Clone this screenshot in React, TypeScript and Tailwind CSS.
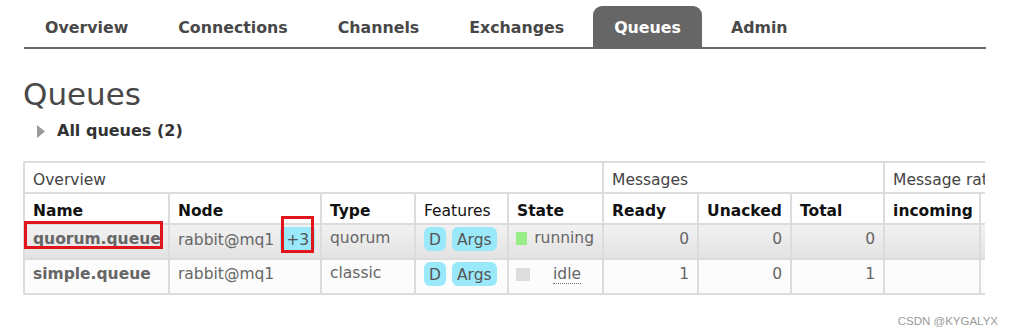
import React from "react";

const tabs = ["Overview", "Connections", "Channels", "Exchanges", "Queues", "Admin"];

const bd = "border-2 border-[#dcdcdc]";

function Badge({ children, cls = "" }: { children: React.ReactNode; cls?: string }) {
  return (
    <span className={`inline-block rounded-[6px] bg-[#9ae9fb] px-[5px] pt-[3px] pb-[1px] leading-[20px] text-[#555] ${cls}`}>
      {children}
    </span>
  );
}

export default function App() {
  const th = `${bd} h-[31px] px-[8px] pt-[4px] text-left align-middle`;
  const td = `${bd} h-[35px] px-[8px] pb-[5px] align-middle text-[#666]`;
  const num = `${bd} h-[35px] pr-[8px] pb-[6px] text-right align-middle text-[#666]`;
  return (
    <div
      className="relative h-[335px] w-[1015px] overflow-hidden bg-white text-[#484848]"
      style={{ fontFamily: '"DejaVu Sans", Verdana, sans-serif' }}
    >
      {/* nav */}
      <div className="ml-[24px] w-[962px] pt-[6px]">
        <div className="flex gap-[8px] border-b-2 border-[#666]">
          {tabs.map((t) =>
            t === "Queues" ? (
              <div
                key={t}
                className="flex h-[41px] items-center rounded-t-[9px] bg-[#666] px-[21px] pt-[2px] text-[15.8px] font-bold text-white"
              >
                {t}
              </div>
            ) : (
              <div key={t} className="flex h-[41px] items-center px-[21px] pt-[2px] text-[15.8px] font-bold text-[#484848]">
                {t}
              </div>
            )
          )}
        </div>
      </div>

      <h1 className="ml-[23px] mt-[27px] text-[31px] font-normal leading-[37px] text-[#484848]">Queues</h1>

      <div className="ml-[37px] mt-[8px] flex h-[20px] items-center gap-[12px]">
        <svg width="8" height="13" viewBox="0 0 8 13">
          <polygon points="0,0 8,6.5 0,13" fill="#9a9a9a" />
        </svg>
        <span className="text-[16px] font-bold leading-[20px] text-[#333]">All queues (2)</span>
      </div>

      <div className="relative ml-[23px] mt-[20px] w-[962px] overflow-hidden">
        <table className="w-[1100px] table-fixed border-collapse text-[15.5px] leading-[20px]">
          <colgroup>
            <col className="w-[145px]" />
            <col className="w-[152px]" />
            <col className="w-[94px]" />
            <col className="w-[93px]" />
            <col className="w-[95px]" />
            <col className="w-[95px]" />
            <col className="w-[93px]" />
            <col className="w-[93px]" />
            <col className="w-[96px]" />
            <col className="w-[144px]" />
          </colgroup>
          <thead>
            <tr>
              <th colSpan={5} className={`${th} font-normal text-[#444]`}>Overview</th>
              <th colSpan={3} className={`${th} font-normal text-[#444]`}>Messages</th>
              <th colSpan={2} className={`${th} whitespace-nowrap font-normal text-[#444]`}>Message rates</th>
            </tr>
            <tr className="text-[#111]">
              <th className={th}>Name</th>
              <th className={th}>Node</th>
              <th className={th}>Type</th>
              <th className={`${th} font-normal`}>Features</th>
              <th className={th}>State</th>
              <th className={th}>Ready</th>
              <th className={th}>Unacked</th>
              <th className={th}>Total</th>
              <th className={th}>incoming</th>
              <th className={th}></th>
            </tr>
          </thead>
          <tbody>
            <tr className="bg-gradient-to-b from-[#f2f2f2] to-[#e2e2e2]">
              <td className={`${td} font-bold text-[#111]`}>quorum.queue</td>
              <td className={`${td} whitespace-nowrap pb-[2px]`}>
                rabbit@mq1{" "}
                <span className="ml-[1px] inline-block rounded-[4px] bg-[#9ae9fb] px-[6px] pt-[3px] pb-[1px] leading-[20px] text-[#555]">
                  +3
                </span>
              </td>
              <td className={`${td} pb-[7px]`}>quorum</td>
              <td className={`${td} pb-[3px] pl-[8px]`}>
                <div className="flex gap-[6px]">
                  <Badge>D</Badge>
                  <Badge>Args</Badge>
                </div>
              </td>
              <td className={`${td} pb-[7px] pl-[7px]`}>
                <span className="flex items-center gap-[7px]">
                  <span className="inline-block h-[13px] w-[14px] bg-[#99ee88]" />
                  running
                </span>
              </td>
              <td className={num}>0</td>
              <td className={num}>0</td>
              <td className={num}>0</td>
              <td className={td}></td>
              <td className={td}></td>
            </tr>
            <tr className="bg-[#fcfcfc]">
              <td className={`${td} font-bold text-[#111]`}>simple.queue</td>
              <td className={td}>rabbit@mq1</td>
              <td className={`${td} pb-[7px]`}>classic</td>
              <td className={`${td} pb-[3px] pl-[8px]`}>
                <div className="flex gap-[6px]">
                  <Badge>D</Badge>
                  <Badge>Args</Badge>
                </div>
              </td>
              <td className={`${td} pb-[3px] pl-[7px]`}>
                <span className="flex items-center">
                  <span className="inline-block h-[13px] w-[14px] bg-[#dddddd]" />
                  <span className="ml-[23px] border-b border-dotted border-[#777] leading-[18px]">idle</span>
                </span>
              </td>
              <td className={num}>1</td>
              <td className={num}>0</td>
              <td className={num}>1</td>
              <td className={td}></td>
              <td className={td}></td>
            </tr>
          </tbody>
        </table>
        {/* annotations */}
        <div className="pointer-events-none absolute left-[1px] top-[60px] h-[28px] w-[139px] border-[3px] border-[#e2141c]" />
        <div className="pointer-events-none absolute left-[258px] top-[55px] h-[37px] w-[33px] border-[3px] border-[#e2141c]" />
      </div>

      <div
        className="absolute bottom-[5px] right-[17px] text-[11.5px] text-[#9a9a9a]"
        style={{ fontFamily: '"Liberation Sans", Arial, sans-serif' }}
      >
        CSDN @KYGALYX
      </div>
    </div>
  );
}
